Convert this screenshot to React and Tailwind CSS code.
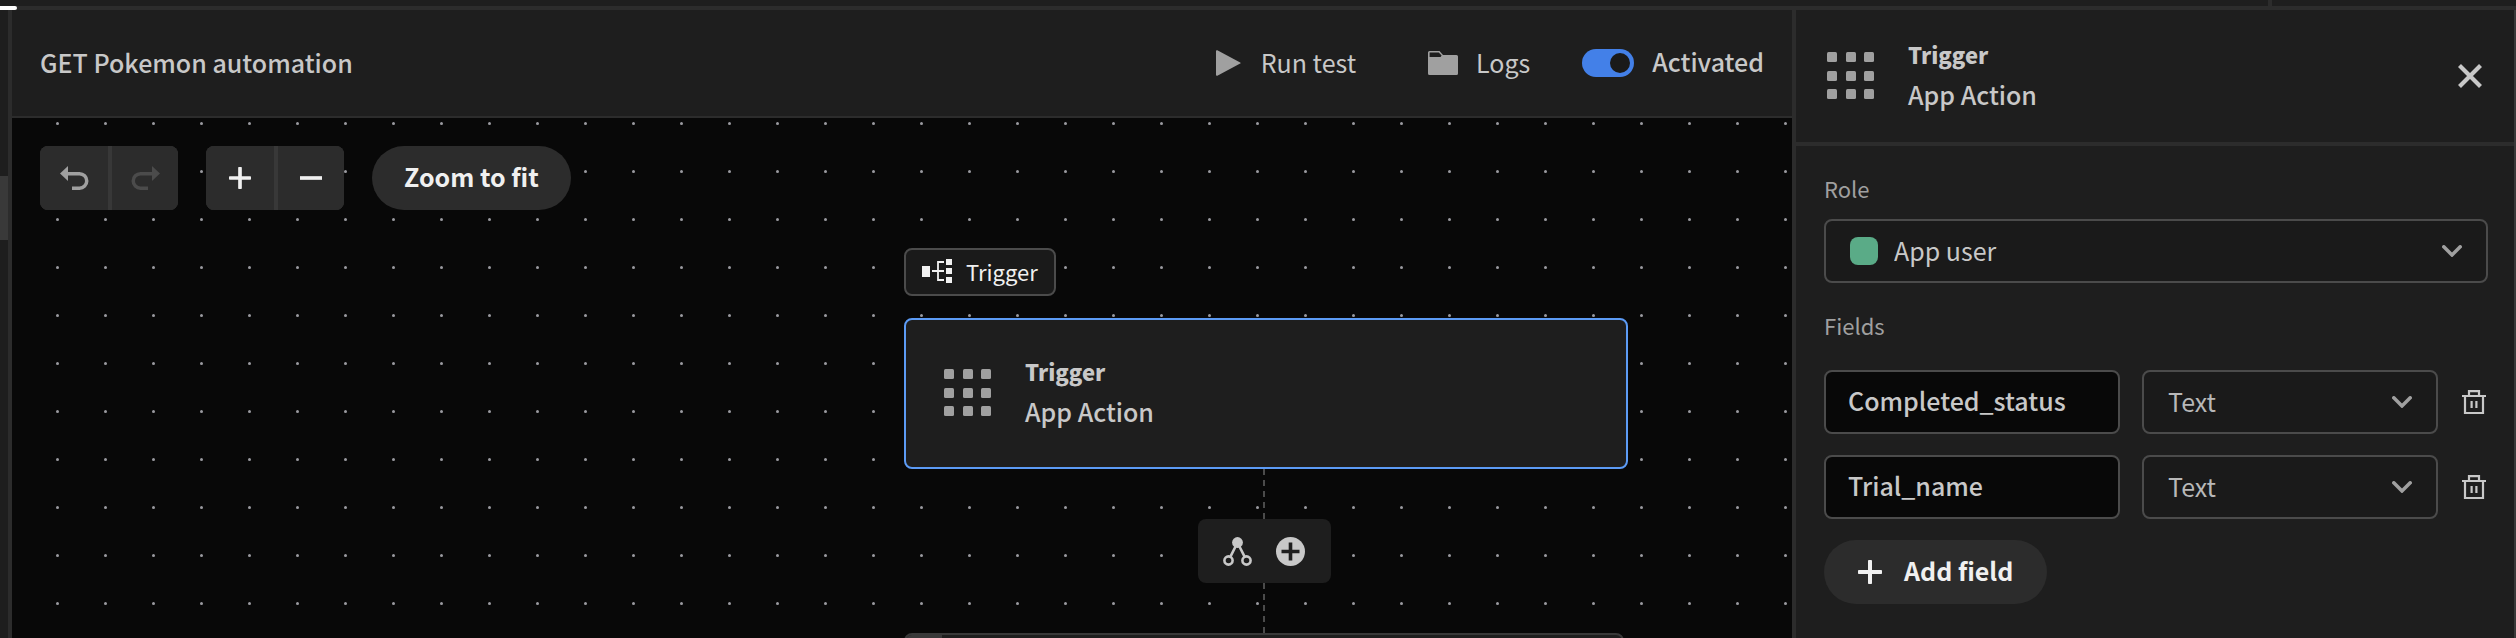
import { useState } from "react"

const FONT = "font-['Noto_Sans_CJK_SC','Noto_Sans',sans-serif]"

function GridIcon() {
  return (
    <svg className="w-[48px] h-[48px] shrink-0 text-[#a0a0a0]" viewBox="0 0 48 48" fill="currentColor" aria-hidden="true">
      {[0, 19, 37].map((y) => [0, 19, 37].map((x) => (
        <rect key={`${x}-${y}`} x={x} y={y} width="10" height="10" rx="1.5" />
      )))}
    </svg>
  )
}

function PlusIcon({ className }) {
  return (
    <svg className={className} viewBox="0 0 24 24" fill="currentColor" aria-hidden="true">
      <rect x="0" y="10" width="24" height="4" rx="0.8" />
      <rect x="10" y="0" width="4" height="24" rx="0.8" />
    </svg>
  )
}

function MinusIcon() {
  return (
    <svg className="w-[22px] h-[22px]" viewBox="0 0 24 24" fill="currentColor" aria-hidden="true">
      <rect x="0" y="10" width="24" height="4" />
    </svg>
  )
}

function UndoIcon({ className }) {
  return (
    <svg className={className} viewBox="0 0 29 24" aria-hidden="true">
      <path d="M0 7.5 8 0v15z" fill="currentColor" />
      <path d="M6 7.7h13.500a7.200 7.200 0 0 1 0 14.500H12" fill="none" stroke="currentColor" strokeWidth="3.500" />
    </svg>
  )
}

function ChevronIcon() {
  return (
    <svg className="w-[20px] h-[12px] text-[#a0a0a0] pointer-events-none absolute right-[26px] top-[26px]" viewBox="0 0 20 12" fill="none" stroke="currentColor" strokeWidth="3.500" strokeLinecap="round" aria-hidden="true">
      <path d="M1.8 1.8 10 10l8.2-8.2" />
    </svg>
  )
}

function TrashIcon() {
  return (
    <svg className="w-[24px] h-[24px]" viewBox="0 0 24 24" fill="none" stroke="currentColor" strokeWidth="2.200" aria-hidden="true">
      <path d="M0 6h24M3 6v17h18V6M7 6V1.2h10V6M9.6 11v7M14.4 11v7" />
    </svg>
  )
}

function ToolButton({ label, children, disabled, className }) {
  return (
    <button aria-label={label} disabled={disabled} className={`flex items-center justify-center h-[64px] bg-[#2c2c2c] ${className}`}>
      {children}
    </button>
  )
}

function FieldRow({ name, id }) {
  return (
    <div className="grid grid-cols-[minmax(0,1fr)_minmax(0,1fr)_28px] items-center gap-[22px]">
      <input
        aria-label={`Field name ${id}`}
        defaultValue={name}
        className="w-full h-[64px] px-[22px] pb-[4px] rounded-[8px] border-2 border-[#4b4b4b] bg-[#080808] text-[25px] font-medium text-[#c8c8c8] outline-none"
      />
      <div className="relative">
        <select aria-label={`Field type ${id}`} className="appearance-none w-full h-[64px] px-[24px] rounded-[8px] border-2 border-[#4b4b4b] bg-[#1a1a1a] text-[25px] text-[#b8b8b8] outline-none">
          <option>Text</option>
        </select>
        <ChevronIcon />
      </div>
      <button aria-label={`Delete ${name}`} className="flex w-[28px] h-[28px] items-center justify-center text-[#c8c8c8]">
        <TrashIcon />
      </button>
    </div>
  )
}

function Header() {
  const [active, setActive] = useState(true)

  return (
    <header className="flex items-center justify-between h-[108px] shrink-0 px-[28px] border-b-2 border-[#2c2c2c]">
      <h1 className="pb-[3px] text-[25px] leading-[32px] font-medium text-[#c8c8c8]">GET Pokemon automation</h1>
      <div className="flex items-center text-[25px] leading-[32px]">
        <button className="flex items-center gap-[20px] text-[#c8c8c8] mr-[72px]">
          <svg className="w-[25px] h-[26px] text-[#a0a0a0]" viewBox="0 0 25 26" fill="currentColor" aria-hidden="true">
            <path d="M0 1.2C0 .2 1 0 1.8.4L24.2 12.4c.6.4.6.9 0 1.2L1.8 25.6C1 26 0 25.8 0 24.8z" />
          </svg>
          <span className="pb-[2px]">Run test</span>
        </button>
        <button className="flex items-center gap-[18px] text-[#c8c8c8] mr-[52px]">
          <svg className="w-[30px] h-[24px] text-[#a0a0a0]" viewBox="0 0 30 24" fill="currentColor" aria-hidden="true">
            <path fillRule="evenodd" d="M1.5 0H11.5L15 4H28.5Q30 4 30 5.5V22.500Q30 24 28.500 24H1.500Q0 24 0 22.500V1.500Q0 0 1.500 0ZM1.600 1.600V6H12.600L13.600 4.600L10.800 1.600Z" />
          </svg>
          <span className="pb-[2px]">Logs</span>
        </button>
        <label className="flex items-center gap-[18px] font-medium text-[#c8c8c8]">
          <input type="checkbox" role="switch" checked={active} onChange={() => setActive(!active)} className="peer sr-only" />
          <span className="flex items-center w-[52px] h-[28px] px-[4px] rounded-full bg-[#6e6e6e] peer-checked:bg-[#4380e8] peer-checked:justify-end">
            <span className="w-[20px] h-[20px] rounded-full bg-[#1a1a1a]" />
          </span>
          <span className="pb-[5px]">Activated</span>
        </label>
      </div>
    </header>
  )
}

function Canvas() {
  return (
    <div className="relative flex-1 overflow-hidden bg-[#080808]">
      <svg className="absolute inset-0 w-full h-full" aria-hidden="true">
        <defs>
          <pattern id="dots" x="44" y="4" width="48" height="48" patternUnits="userSpaceOnUse">
            <circle cx="1.500" cy="1.500" r="1.500" fill="#9a9aa0" />
          </pattern>
        </defs>
        <rect width="100%" height="100%" fill="url(#dots)" />
      </svg>

      <div className="relative flex gap-[28px] px-[28px] pt-[28px] text-[#f0f0f0]">
        <div className="flex gap-[4px] rounded-[8px] overflow-hidden bg-[#383838]">
          <ToolButton label="Undo" className="w-[68px]"><UndoIcon className="w-[29px] h-[24px] text-[#a0a0a0]" /></ToolButton>
          <ToolButton label="Redo" disabled className="w-[66px]"><UndoIcon className="w-[29px] h-[24px] text-[#4b4b4b] -scale-x-100" /></ToolButton>
        </div>
        <div className="flex gap-[4px] rounded-[8px] overflow-hidden bg-[#383838]">
          <ToolButton label="Zoom in" className="w-[68px]"><PlusIcon className="w-[22px] h-[22px]" /></ToolButton>
          <ToolButton label="Zoom out" className="w-[66px]"><MinusIcon /></ToolButton>
        </div>
        <button className="h-[64px] px-[32px] pb-[3px] rounded-full bg-[#2c2c2c] text-[25px] font-bold">Zoom to fit</button>
      </div>

      {/* flow of automation blocks */}
      <div className="absolute left-[892px] top-[130px] flex flex-col w-[724px]">
        <div className="flex self-start items-center gap-[14px] h-[48px] px-[16px] pb-[2px] rounded-[8px] border-2 border-[#4b4b4b] bg-[#1a1a1a] text-[22px] text-[#f0f0f0]">
          <svg className="w-[30px] h-[24px]" viewBox="0 0 30 24" fill="currentColor" aria-hidden="true">
            <rect x="0" y="7" width="8" height="11" />
            <path d="M10 12h12M22 3h-6v18h6" fill="none" stroke="currentColor" strokeWidth="1.800" />
            <rect x="24" y="0" width="6" height="6" />
            <rect x="24" y="9" width="6" height="6" />
            <rect x="24" y="18" width="6" height="6" />
          </svg>
          Trigger
        </div>
        <div className="flex items-center gap-[33px] h-[151px] mt-[22px] px-[38px] pb-[2px] rounded-[8px] border-2 border-[#5c9bf5] bg-[#1e1e1e] text-[#c8c8c8]">
          <GridIcon />
          <div className="pb-[4px]">
            <div className="text-[22px] leading-[40px] font-black">Trigger</div>
            <div className="text-[25px] leading-[40px] font-medium">App Action</div>
          </div>
        </div>
        <div className="flex flex-col items-center w-[720px]">
          <div className="w-[2px] h-[50px] bg-[repeating-linear-gradient(to_bottom,#4b4b4b_0px,#4b4b4b_6px,transparent_6px,transparent_11px)]" />
          <div className="flex items-center justify-center gap-[24px] w-[133px] h-[64px] rounded-[8px] bg-[#1e1e1e] text-[#c8c8c8]">
            <button aria-label="Add branch">
              <svg className="w-[29px] h-[29px]" viewBox="0 0 29 29" fill="none" stroke="currentColor" strokeWidth="2.600" aria-hidden="true">
                <circle cx="14.500" cy="5.500" r="5.400" fill="currentColor" stroke="none" />
                <circle cx="5.500" cy="23.500" r="4.100" />
                <circle cx="23.500" cy="23.500" r="4.100" />
                <path d="M12.800 9 7.300 19.800M16.200 9l5.500 10.800" />
              </svg>
            </button>
            <button aria-label="Add step">
              <svg className="w-[29px] h-[29px]" viewBox="0 0 29 29" aria-hidden="true">
                <circle cx="14.500" cy="14.500" r="14.500" fill="currentColor" />
                <path d="M5.500 14.500h18M14.500 5.500v18" stroke="#1e1e1e" strokeWidth="3.600" />
              </svg>
            </button>
          </div>
          <div className="w-[2px] h-[50px] bg-[repeating-linear-gradient(to_bottom,#4b4b4b_0px,#4b4b4b_6px,transparent_6px,transparent_11px)]" />
        </div>
        <div className="w-[720px] h-[151px] rounded-[8px] border-2 border-[#393939] bg-[#1e1e1e] overflow-hidden">
          <div className="w-[36px] h-full bg-[#393939]" />
        </div>
      </div>
    </div>
  )
}

function SidePanel() {
  return (
    <aside className="w-[724px] shrink-0 border-l-4 border-r-2 border-l-[#2c2c2c] border-r-[#393939] text-[#c8c8c8]">
      <div className="flex items-center h-[136px] pl-[31px] pr-[32px] border-b-4 border-[#2c2c2c]">
        <GridIcon />
        <div className="ml-[33px] flex-1 pb-[4px]">
          <div className="text-[22px] leading-[40px] font-black">Trigger</div>
          <div className="text-[25px] leading-[40px] font-medium">App Action</div>
        </div>
        <button aria-label="Close">
          <svg className="w-[24px] h-[24px]" viewBox="0 0 24 24" fill="none" stroke="currentColor" strokeWidth="4.200" aria-hidden="true">
            <path d="M1.500 1.500l21 21M22.500 1.500l-21 21" />
          </svg>
        </button>
      </div>

      <div className="pl-[28px] pr-[26px] pt-[26px]">
        <label htmlFor="role" className="block text-[22px] leading-[32px] text-[#a0a0a0]">Role</label>
        <div className="relative mt-[15px]">
          <span className="absolute left-[26px] top-[18px] w-[28px] h-[28px] rounded-[8px] bg-[#5aab87] pointer-events-none z-10" />
          <select id="role" className="appearance-none w-full h-[64px] pl-[68px] pr-[60px] rounded-[8px] border-2 border-[#4b4b4b] bg-[#1a1a1a] text-[25px] text-[#c8c8c8] outline-none">
            <option>App user</option>
          </select>
          <ChevronIcon />
        </div>

        <div className="mt-[26px] text-[22px] leading-[32px] text-[#a0a0a0]">Fields</div>
        <div className="flex flex-col gap-[21px] mt-[29px]">
          <FieldRow name="Completed_status" id="1" />
          <FieldRow name="Trial_name" id="2" />
          <button className="flex self-start items-center gap-[22px] h-[64px] px-[34px] rounded-full bg-[#2c2c2c] text-[25px] font-bold text-[#f0f0f0]">
            <PlusIcon className="w-[24px] h-[24px]" />
            <span className="pb-[3px]">Add field</span>
          </button>
        </div>
      </div>
    </aside>
  )
}

export default function App() {
  return (
    <div className={`flex flex-col h-screen overflow-hidden bg-[#1e1e1e] ${FONT}`}>
      <div className="relative flex justify-end h-[10px] shrink-0 border-b-4 border-[#2c2c2c]">
        <div className="absolute left-0 top-[6px] w-[17px] h-[4px] rounded-r-[2px] bg-white" />
        <div className="w-[248px] border-l-4 border-[#2c2c2c]" />
      </div>
      <div className="flex flex-1 min-h-0">
        <div className="w-[12px] shrink-0 border-r-4 border-[#2c2c2c] pt-[166px]">
          <div className="h-[64px] bg-[#393939]" />
        </div>
        <main className="flex flex-col flex-1 min-w-0">
          <Header />
          <Canvas />
        </main>
        <SidePanel />
      </div>
    </div>
  )
}
